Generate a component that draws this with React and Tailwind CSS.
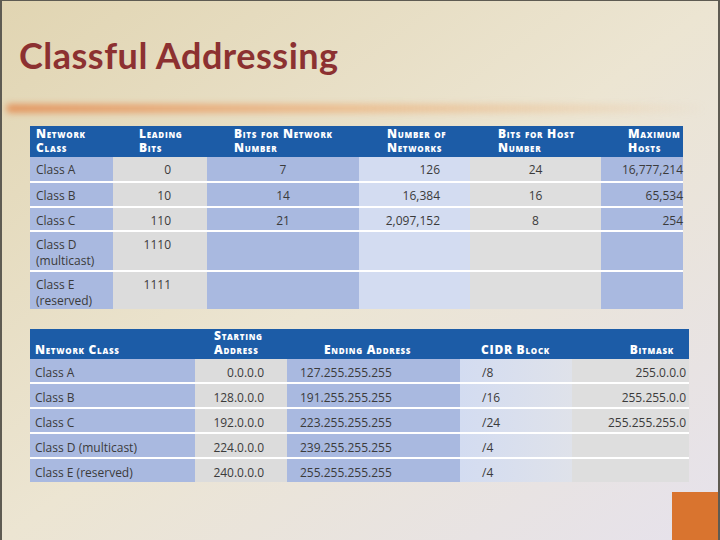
const T1_COLS = 'grid grid-cols-[83px_94px_152px_111px_131px_82px]'
const T2_COLS = 'grid grid-cols-[165px_92px_173px_112px_117px]'

const T1_ROWS = [
  { name: ['Class A'], lead: '0', net: '7', count: '126', host: '24', max: '16,777,214', h: 'h-[24px]' },
  { name: ['Class B'], lead: '10', net: '14', count: '16,384', host: '16', max: '65,534', h: 'h-[23px]' },
  { name: ['Class C'], lead: '110', net: '21', count: '2,097,152', host: '8', max: '254', h: 'h-[22px]' },
  { name: ['Class D', '(multicast)'], lead: '1110', net: '', count: '', host: '', max: '', h: 'h-[38px]' },
  { name: ['Class E', '(reserved)'], lead: '1111', net: '', count: '', host: '', max: '', h: 'h-[34px]' },
]

const T2_ROWS = [
  { name: 'Class A', start: '0.0.0.0', end: '127.255.255.255', cidr: '/8', mask: '255.0.0.0' },
  { name: 'Class B', start: '128.0.0.0', end: '191.255.255.255', cidr: '/16', mask: '255.255.0.0' },
  { name: 'Class C', start: '192.0.0.0', end: '223.255.255.255', cidr: '/24', mask: '255.255.255.0' },
  { name: 'Class D (multicast)', start: '224.0.0.0', end: '239.255.255.255', cidr: '/4', mask: '' },
  { name: 'Class E (reserved)', start: '240.0.0.0', end: '255.255.255.255', cidr: '/4', mask: '' },
]

function Head({ children, className = '' }) {
  return (
    <div className={`text-[12px] leading-[14px] font-extrabold tracking-[0.06em] text-white [font-variant:small-caps] whitespace-nowrap ${className}`}>
      {children}
    </div>
  )
}

function SlideTitle() {
  return (
    <h1 className="pl-[17px] pt-[36px] font-['Lato',sans-serif] text-[36px] leading-[36px] font-bold text-[#8c3131] tracking-[0.5px]">
      Classful Addressing
    </h1>
  )
}

function NetworkTable() {
  return (
    <div className="ml-[28px] w-[653px] text-[#3b3b3b]">
      <div className={`${T1_COLS} h-[31px] bg-[#1c5ca7] pt-[1px]`}>
        <Head className="pl-[6px]">Network<br />Class</Head>
        <Head className="pl-[26px]">Leading<br />Bits</Head>
        <Head className="pl-[27px]">Bits for Network<br />Number</Head>
        <Head className="pl-[28px]">Number of<br />Networks</Head>
        <Head className="pl-[28px]">Bits for Host<br />Number</Head>
        <Head className="pl-[27px] tracking-[0.03em]">Maximum<br />Hosts</Head>
      </div>
      {T1_ROWS.map((r, i) => (
        <div key={i} className={`${T1_COLS} ${r.h} ${i > 0 ? 'border-t-2 border-white' : ''} box-content text-[12px] leading-[16px]`}>
          <div className="bg-[#a9b9e0] pl-[6px] pt-[5px]">
            {r.name.map((n) => <div key={n}>{n}</div>)}
          </div>
          <div className="bg-[#dcdcdc] pr-[36px] pt-[5px] text-right">{r.lead}</div>
          <div className="bg-[#a9b9e0] pt-[5px] text-center">{r.net}</div>
          <div className="bg-[#d3dcf1] pr-[30px] pt-[5px] text-right">{r.count}</div>
          <div className="bg-[#dedede] pt-[5px] text-center">{r.host}</div>
          <div className="bg-[#a9b9e0] pt-[5px] text-right">{r.max}</div>
        </div>
      ))}
    </div>
  )
}

function AddressTable() {
  return (
    <div className="ml-[28px] mt-[23px] w-[659px] text-[#3b3b3b]">
      <div className={`${T2_COLS} h-[30px] bg-[#1c5ca7] items-end pb-[2px]`}>
        <Head className="pl-[5px]">Network Class</Head>
        <Head className="pl-[19px]">Starting<br />Address</Head>
        <Head className="pl-[37px]">Ending Address</Head>
        <Head className="pl-[21px]">CIDR Block</Head>
        <Head className="pr-[15px] text-right">Bitmask</Head>
      </div>
      {T2_ROWS.map((r, i) => (
        <div key={i} className={`${T2_COLS} h-[23px] ${i > 0 ? 'border-t-2 border-white' : ''} box-content text-[12px] leading-[18px]`}>
          <div className="bg-[#a9b9e0] pl-[5px] pt-[5px]">{r.name}</div>
          <div className="bg-[#dcdcdc] pr-[23px] pt-[5px] text-right">{r.start}</div>
          <div className="bg-[#a9b9e0] pl-[13px] pt-[5px]">{r.end}</div>
          <div className="bg-gradient-to-r from-[#d3dcf1] to-[#dfe2ea] pl-[22px] pt-[5px]">{r.cidr}</div>
          <div className="bg-[#dedede] pr-[3px] pt-[5px] text-right">{r.mask}</div>
        </div>
      ))}
    </div>
  )
}

export default function App() {
  return (
    <div className="relative w-[720px] h-[540px] overflow-hidden border-t border-l-2 border-r-2 border-[#5e5b52] bg-gradient-to-br from-[#e1d5b2] via-[#ece5d2] to-[#e6e2ec] font-['Open_Sans',sans-serif]">
      <SlideTitle />
      {/* orange rule under the title */}
      <div className="ml-[4px] mt-[31px] h-[9px] w-[700px] rounded-full bg-gradient-to-r from-[#e39660] via-[#ebbf92] to-transparent blur-[3px]" />
      <div className="mt-[13px]">
        <NetworkTable />
        <AddressTable />
      </div>
      <div className="absolute bottom-0 right-0 w-[46px] h-[48px] bg-[#d9742f]" />
    </div>
  )
}
